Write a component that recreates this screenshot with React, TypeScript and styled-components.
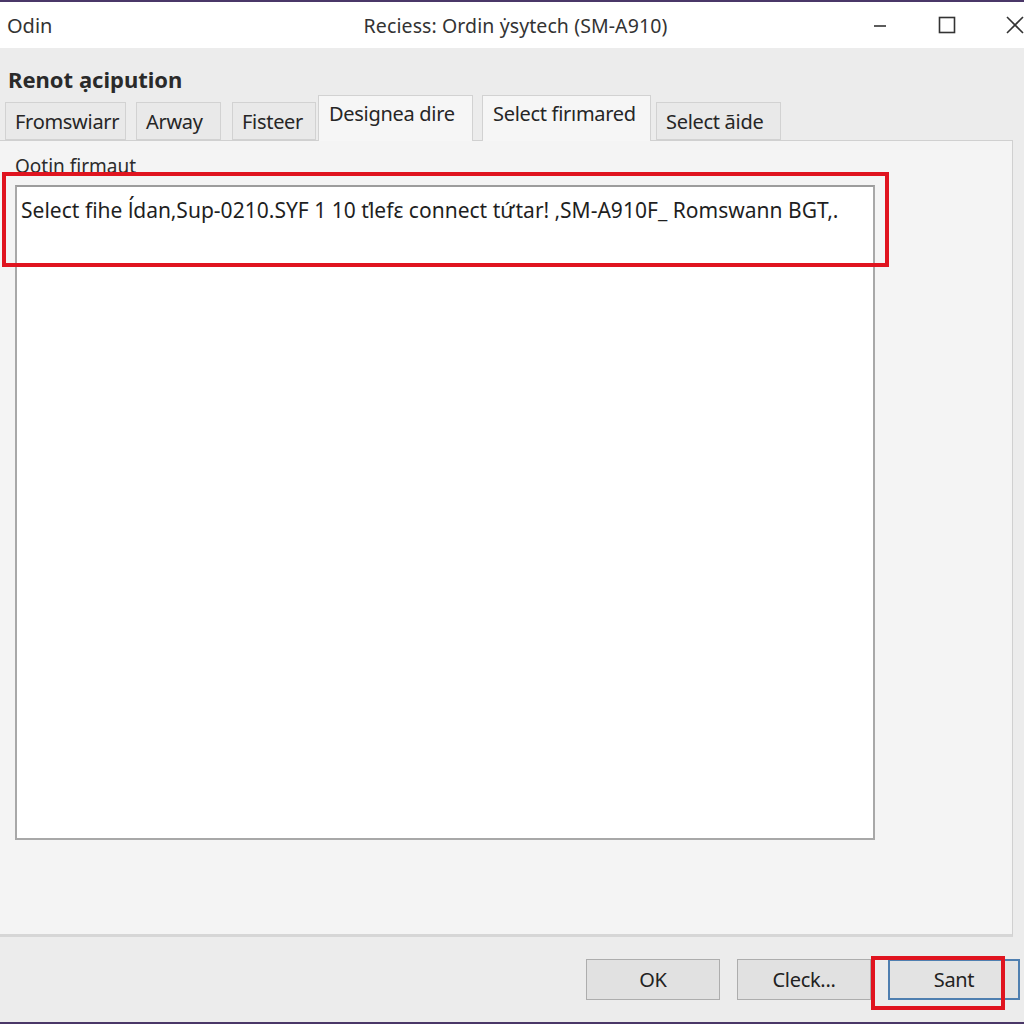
import styled, { createGlobalStyle } from "styled-components";

const GlobalStyle = createGlobalStyle`
  html, body {
    margin: 0;
    padding: 0;
    background: #ececec;
  }
  * {
    box-sizing: border-box;
  }
`;

const Window = styled.div`
  width: 1024px;
  height: 1024px;
  display: flex;
  flex-direction: column;
  background-color: #ececec;
  border-top: 2px solid #4a3768;
  border-bottom: 2px solid #4a3768;
  font-family: "Noto Sans", "Open Sans", sans-serif;
  color: #1e1e1e;
  overflow: hidden;
`;

const TitleBar = styled.div`
  height: 46px;
  flex-shrink: 0;
  background-color: #ffffff;
  display: grid;
  grid-template-columns: 1fr auto 1fr;
  align-items: center;
  padding-left: 7px;
`;

const AppName = styled.span`
  font-size: 20px;
  color: #333333;
`;

const Caption = styled.span`
  font-size: 19.5px;
  color: #333333;
  letter-spacing: 0.1px;
`;

const Controls = styled.div`
  display: flex;
  justify-content: flex-end;
  align-items: center;
  height: 100%;
`;

const ControlButton = styled.div<{ w?: number }>`
  width: ${(p) => p.w ?? 67}px;
  height: 100%;
  display: flex;
  align-items: center;
  justify-content: center;
`;

const Heading = styled.div`
  font-size: 22px;
  font-weight: 700;
  color: #2a2a2a;
  padding: 16px 0 0 8px;
  height: 47px;
  flex-shrink: 0;
  line-height: 30px;
`;

const TabRow = styled.div`
  display: flex;
  align-items: flex-end;
  height: 45px;
  padding-left: 5px;
  flex-shrink: 0;
`;

const Tab = styled.div<{ width: number; active?: boolean; gap?: number }>`
  width: ${(p) => p.width}px;
  margin-left: ${(p) => p.gap ?? 0}px;
  height: ${(p) => (p.active ? 46 : 38)}px;
  padding-top: ${(p) => (p.active ? 4 : 5)}px;
  padding-left: ${(p) => (p.active ? 10 : 9)}px;
  font-size: 20px;
  color: #262626;
  background-color: ${(p) => (p.active ? "#f6f6f6" : "#e9e9e9")};
  border: 1px solid #d2d2d2;
  border-bottom: ${(p) => (p.active ? "none" : "1px solid #d2d2d2")};
  position: relative;
  z-index: ${(p) => (p.active ? 1 : 0)};
  margin-bottom: ${(p) => (p.active ? -1 : 0)}px;
  white-space: nowrap;
  letter-spacing: -0.3px;
`;

const Panel = styled.div`
  flex: 1;
  width: 1014px;
  margin-left: -1px;
  background-color: #f4f4f4;
  border: 1px solid #d0d0d0;
  border-bottom: 3px solid #d6d6d6;
  padding: 14px 0 0 15px;
  display: flex;
  flex-direction: column;
  position: relative;
`;

const GroupLabel = styled.div`
  font-size: 19px;
  color: #2c2c2c;
  height: 32px;
  line-height: 26px;
  margin-top: -2px;
`;

const TextArea = styled.div`
  width: 860px;
  height: 655px;
  background-color: #ffffff;
  border: 2px solid #a8a8a8;
  border-top-color: #9c9c9c;
  padding: 9px 0 0 4px;
  font-size: 21px;
  letter-spacing: 0.02px;
  color: #1f1f1f;
  white-space: nowrap;
`;

const Highlight = styled.div<{ top: number; left: number; w: number; h: number }>`
  position: absolute;
  top: ${(p) => p.top}px;
  left: ${(p) => p.left}px;
  width: ${(p) => p.w}px;
  height: ${(p) => p.h}px;
  border: 4px solid #e0141f;
  pointer-events: none;
  z-index: 3;
`;

const Footer = styled.div`
  height: 85px;
  flex-shrink: 0;
  display: flex;
  justify-content: flex-end;
  align-items: flex-start;
  padding: 22px 4px 0 0;
  gap: 17px;
  position: relative;
`;

const Button = styled.div<{ primary?: boolean; w?: number }>`
  width: ${(p) => p.w ?? 134}px;
  height: 41px;
  display: flex;
  align-items: center;
  justify-content: center;
  font-size: 20px;
  color: #222222;
  background-color: ${(p) => (p.primary ? "#e3e3e3" : "#e1e1e1")};
  border: ${(p) => (p.primary ? "2px solid #4f7fb0" : "1px solid #adadad")};
  letter-spacing: -0.3px;
`;

const App = () => {
  return (
    <>
      <GlobalStyle />
      <Window>
        <TitleBar>
          <AppName>Odin</AppName>
          <Caption>Reciess: Ordin ẏsytech (SM-A910)</Caption>
          <Controls>
            <ControlButton>
              <svg width="14" height="14" viewBox="0 0 14 14">
                <line x1="1" y1="8" x2="13" y2="8" stroke="#333" strokeWidth="1.6" />
              </svg>
            </ControlButton>
            <ControlButton>
              <svg width="18" height="18" viewBox="0 0 18 18">
                <rect x="1.5" y="1.5" width="15" height="15" fill="none" stroke="#333" strokeWidth="1.6" />
              </svg>
            </ControlButton>
            <ControlButton w={44} style={{ justifyContent: "flex-end" }}>
              <svg width="18" height="18" viewBox="0 0 18 18">
                <line x1="1" y1="1" x2="17" y2="17" stroke="#333" strokeWidth="1.6" />
                <line x1="17" y1="1" x2="1" y2="17" stroke="#333" strokeWidth="1.6" />
              </svg>
            </ControlButton>
          </Controls>
        </TitleBar>

        <Heading>Renot ạcipution</Heading>

        <TabRow>
          <Tab width={121}>Fromswiarr</Tab>
          <Tab width={85} gap={10}>Arway</Tab>
          <Tab width={84} gap={11}>Fisteer</Tab>
          <Tab width={155} gap={2} active>Designea dire</Tab>
          <Tab width={169} gap={9} active>Select firımared</Tab>
          <Tab width={125} gap={5}>Select ãide</Tab>
        </TabRow>

        <Panel>
          <GroupLabel>Ootin firmaut</GroupLabel>
          <TextArea>
            Select fihe ĺdan‚Sup-0210.SYF 1 10 ťlefε connect tứtar! ‚SM-A910F_ Romswann BGT‚.
          </TextArea>
          <Highlight top={31} left={2} w={887} h={95} />
        </Panel>

        <Footer>
          <Button>OK</Button>
          <Button>Cleck...</Button>
          <Button primary w={132}>Sant</Button>
          <Highlight top={19} left={871} w={134} h={54} />
        </Footer>
      </Window>
    </>
  );
};

export default App;
